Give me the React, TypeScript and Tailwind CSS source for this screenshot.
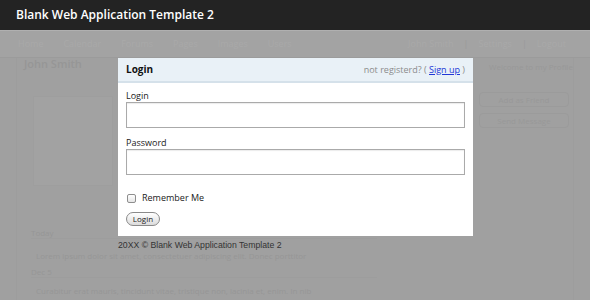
import React from "react";

const faint = "text-[#969696]";

export default function App() {
  return (
    <div className="w-[590px] h-[300px] overflow-hidden bg-[#a0a0a0]" style={{ fontFamily: '"Open Sans", "Liberation Sans", sans-serif' }}>
      {/* Header */}
      <div className="h-[30px] bg-[#232323] flex items-center px-[16px]">
        <span className="text-white font-semibold text-[12px] leading-none">Blank Web Application Template 2</span>
      </div>

      <div className="relative h-[270px]">
        {/* Nav */}
        <div className="h-[28px] bg-[#a3a3a3] border-t border-[#b0b0b0] border-b border-b-[#9b9b9b] flex items-center justify-between px-[18px] text-[9px] text-[#a9a9a9]">
          <div className="flex gap-[20px]">
            <span>Home</span>
            <span>Calendar</span>
            <span>Forums</span>
            <span>Pages</span>
            <span>Images</span>
            <span>Users</span>
          </div>
          <div className="flex gap-[10px] pr-[6px]">
            <span>John Smith</span>
            <span className="text-[#9a9a9a]">|</span>
            <span>Settings</span>
            <span className="text-[#9a9a9a]">|</span>
            <span>Logout</span>
          </div>
        </div>

        {/* Page content (dimmed) */}
        <div className="mx-[16px] h-[242px] border-x border-[#9d9d9d] flex flex-col">
          <div className="flex h-[168px]">
            <div className="w-[210px] pl-[7px]">
              <div className={`text-[11px] leading-[12px] font-semibold ${faint}`}>John Smith</div>
              <div className="mt-[26px] ml-[9px] w-[80px] h-[90px] border border-[#9e9e9e] bg-[#a2a2a2]" />
            </div>
            <div className="w-[240px]" />
            <div className="flex-1 pt-[4px] pl-[12px] flex flex-col items-start text-[8px] text-[#989898]">
              <div className="pl-[10px] whitespace-nowrap leading-[10px]">Welcome to my Profile</div>
              <div className="mt-[20px] w-[90px] h-[15px] rounded-[4px] border border-[#9b9b9b] flex items-center justify-center">Add as Friend</div>
              <div className="mt-[6px] w-[90px] h-[15px] rounded-[4px] border border-[#9b9b9b] flex items-center justify-center">Send Message</div>
            </div>
          </div>
          <div className={`flex text-[8px] leading-[9px] ${faint}`}>
            <div className="w-[360px] pl-[14px] pt-[2px] flex flex-col">
              <div className="border-b border-[#9d9d9d] pb-[1px]">Today</div>
              <div className="mt-[12px] pl-[5px]">Lorem ipsum dolor sit amet, consectetuer adipiscing elit. Donec porttitor</div>
              <div className="mt-[7px] border-b border-[#9d9d9d] pb-[1px]">Dec 5</div>
              <div className="mt-[8px] pl-[5px]">Curabitur erat mauris, tincidunt vitae, tristique non, lacinia et, enim. In nib</div>
            </div>
            <div className="flex-1 pl-[14px]">Friends</div>
          </div>
        </div>

        {/* Modal */}
        <div className="absolute left-[118px] top-[28px] w-[355px]">
          <div className="bg-white">
            <div className="h-[25px] bg-[#e9f1f7] border-b-2 border-[#d5e1ea] flex items-center justify-between px-[8px]">
              <span className="text-[10px] font-bold text-[#111]">Login</span>
              <span className="text-[9px] text-[#8c8c8c]">
                not registerd? ({" "}
                <span className="text-[#2237d6] underline">Sign up</span> )
              </span>
            </div>
            <div className="px-[8px] pt-[7px] pb-[10px] flex flex-col">
              <label className="text-[9px] leading-[11px] text-[#1a1a1a]">Login</label>
              <div className="mt-[1px] h-[26px] w-[339px] border border-[#aaaaaa] shadow-[inset_0_1px_1px_rgba(0,0,0,0.08)]" />
              <label className="mt-[9px] text-[9px] leading-[11px] text-[#1a1a1a]">Password</label>
              <div className="mt-[1px] h-[26px] w-[339px] border border-[#aaaaaa] shadow-[inset_0_1px_1px_rgba(0,0,0,0.08)]" />
              <div className="mt-[17px] h-[12px] flex items-center gap-[6px] pl-[1px]">
                <span className="w-[9px] h-[9px] rounded-[2px] border border-[#8e8e8e] bg-gradient-to-b from-white to-[#e6e6e6]" />
                <span className="text-[9px] text-[#1a1a1a]">Remember Me</span>
              </div>
              <div className="mt-[8px]">
                <div className="w-[34px] h-[14px] rounded-full border border-[#8a8a8a] bg-gradient-to-b from-white to-[#dcdcdc] flex items-center justify-center text-[8px] leading-none text-[#222]">
                  Login
                </div>
              </div>
            </div>
          </div>
          <div className="mt-[5px] text-[8.7px] leading-[8px] text-[#333]" style={{ fontFamily: '"Liberation Sans", Arial, sans-serif' }}>
            20XX © Blank Web Application Template 2
          </div>
        </div>
      </div>
    </div>
  );
}
